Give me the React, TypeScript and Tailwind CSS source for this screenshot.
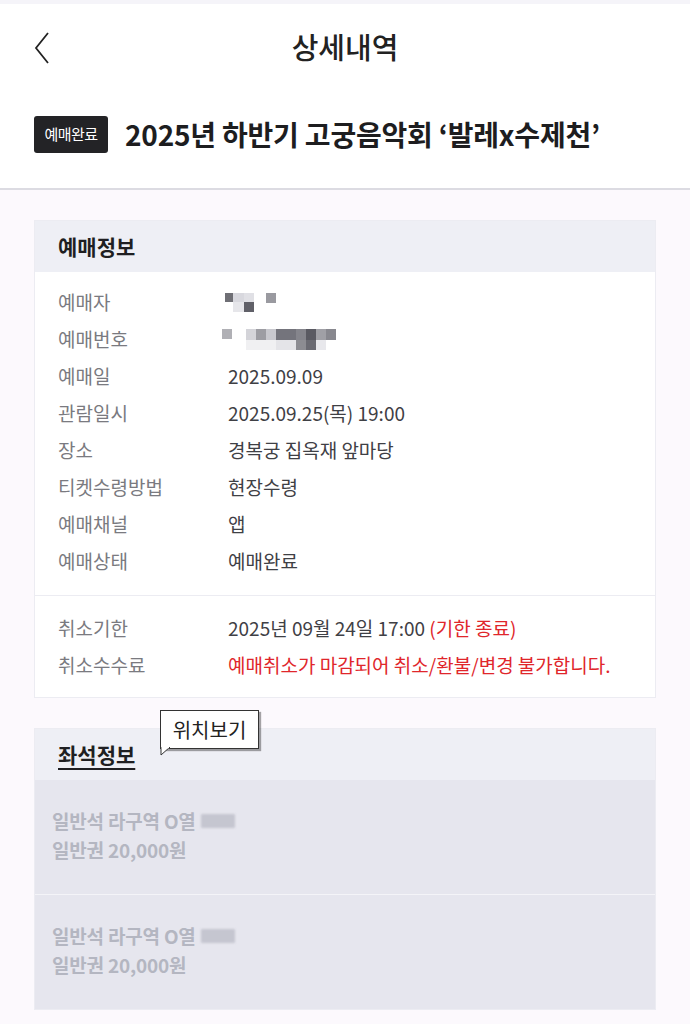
import React from "react";

const font = { fontFamily: '"Noto Sans CJK KR", "Noto Sans", sans-serif' };

function Row({ label, children }: { label: string; children: React.ReactNode }) {
  return (
    <div className="flex h-[37px] items-center text-[19px]">
      <div className="w-[170px] shrink-0 text-[#7a7a80]">{label}</div>
      <div className="text-[#3f4045]">{children}</div>
    </div>
  );
}

function Px({ c, w = 12, h = 12 }: { c: string; w?: number; h?: number }) {
  return <div style={{ background: c, width: w, height: h }} />;
}

function SeatItem() {
  return (
    <div className="flex h-[114px] flex-col justify-start bg-[#e6e6ee] px-[17px] pt-[26px] text-[19px] font-bold leading-[29px] tracking-[-0.2px] text-[#b4b6c1]">
      <div className="flex items-center">
        <span>일반석 라구역 O열</span>
        <span className="ml-[5px] inline-flex h-[14px] w-[34px] rounded-[1px] bg-[#c5c6d0] blur-[1px]" />
      </div>
      <div>일반권 20,000원</div>
    </div>
  );
}

export default function App() {
  return (
    <div className="min-h-[1024px] w-[690px] bg-[#fcf9fd]" style={font}>
      <div className="h-[4px] bg-[#f5f4f9]" />
      <div className="bg-white">
        <div className="relative flex h-[86px] items-center justify-center">
          <svg className="absolute left-[33px] top-[27px]" width="18" height="34" viewBox="0 0 18 34" fill="none">
            <path d="M15 2 L3 17 L15 32" stroke="#222" strokeWidth="1.8" />
          </svg>
          <div className="text-[29px] font-medium text-[#222]">상세내역</div>
        </div>
        <div className="flex h-[98px] items-start px-[34px] pt-[22px]">
          <div className="mt-[4px] flex h-[37px] w-[74px] items-center justify-center rounded-[3px] bg-[#232326] text-[15px] tracking-[-0.5px] text-white">
            예매완료
          </div>
          <div className="ml-[17px] text-[28px] font-bold leading-[44px] tracking-[-0.2px] text-[#1d1d1f]">
            2025년 하반기 고궁음악회 ‘발레x수제천’
          </div>
        </div>
      </div>
      <div className="h-[2px] bg-[#dcdbe2]" />

      <div className="px-[34px] pt-[30px]">
        <div className="border border-[#ececf2] bg-white">
          <div className="flex h-[51px] items-center bg-[#eeeff5] px-[23px] text-[21px] font-bold text-[#1f1f22]">
            예매정보
          </div>
          <div className="px-[23px] pt-[12px] pb-[15px]">
            <Row label="예매자">
              <div className="-ml-[3px] flex blur-[0.6px]">
                <div className="flex flex-col">
                  <div className="flex">
                    <Px c="#6f6f75" w={8} h={9} />
                    <Px c="#d8d8de" w={11} h={9} />
                    <Px c="#e0e0e5" w={10} h={9} />
                  </div>
                  <div className="flex">
                    <Px c="transparent" w={8} h={10} />
                    <Px c="#e6e6ea" w={11} h={10} />
                    <Px c="#606068" w={10} h={10} />
                  </div>
                </div>
                <div className="ml-[12px]">
                  <Px c="#9a9aa0" w={10} h={10} />
                </div>
              </div>
            </Row>
            <Row label="예매번호">
              <div className="-ml-[6px] flex items-start blur-[0.6px]">
                <Px c="#b0b0b5" w={10} h={10} />
                <div className="ml-[14px] flex flex-col">
                  <div className="flex">
                    <Px c="#d4d4d9" w={10} h={11} />
                    <Px c="#9d9da3" w={10} h={11} />
                    <Px c="#c8c8ce" w={10} h={11} />
                    <Px c="#74747c" w={20} h={11} />
                    <Px c="#85858c" w={10} h={11} />
                    <Px c="#5a5a62" w={10} h={11} />
                    <Px c="#a0a0a6" w={10} h={11} />
                    <Px c="#88888f" w={10} h={11} />
                  </div>
                  <div className="flex">
                    <Px c="#f0f0f2" w={30} h={10} />
                    <Px c="#e4e4e8" w={20} h={10} />
                    <Px c="#8c8c92" w={10} h={10} />
                    <Px c="#6a6a72" w={10} h={10} />
                    <Px c="#e8e8ec" w={10} h={10} />
                  </div>
                </div>
              </div>
            </Row>
            <Row label="예매일">2025.09.09</Row>
            <Row label="관람일시">2025.09.25(목) 19:00</Row>
            <Row label="장소">경복궁 집옥재 앞마당</Row>
            <Row label="티켓수령방법">현장수령</Row>
            <Row label="예매채널">앱</Row>
            <Row label="예매상태">예매완료</Row>
          </div>
          <div className="border-t border-[#ececf2] px-[23px] pt-[14px] pb-[13px]">
            <Row label="취소기한">
              2025년 09월 24일 17:00 <span className="text-[#e0262b]">(기한 종료)</span>
            </Row>
            <Row label="취소수수료">
              <span className="text-[#e0262b]">예매취소가 마감되어 취소/환불/변경 불가합니다.</span>
            </Row>
          </div>
        </div>

        <div className="relative mt-[30px] border border-[#ececf2]">
          <div className="flex h-[51px] items-center bg-[#eeeff5] px-[23px] text-[21px] font-bold text-[#1f1f22]">
            <span className="underline decoration-[2px] underline-offset-[5px]">좌석정보</span>
          </div>
          <div className="absolute left-[125px] top-[-19px]">
            <div className="relative flex h-[39px] w-[99px] items-center justify-center border border-[#333] bg-white text-[20px] text-[#222] shadow-[2px_2px_1px_rgba(0,0,0,0.35)]">
              위치보기
            </div>
            <svg className="absolute left-[0px] top-[37px]" width="12" height="10" viewBox="0 0 12 10">
              <path d="M1 0 L1 8 L10 0 Z" fill="white" stroke="#333" strokeWidth="1" />
              <path d="M1.5 0.5 L9 0.5" stroke="white" strokeWidth="1.5" />
            </svg>
          </div>
          <SeatItem />
          <div className="h-px bg-[#f4f4f8]" />
          <SeatItem />
        </div>
      </div>
    </div>
  );
}
